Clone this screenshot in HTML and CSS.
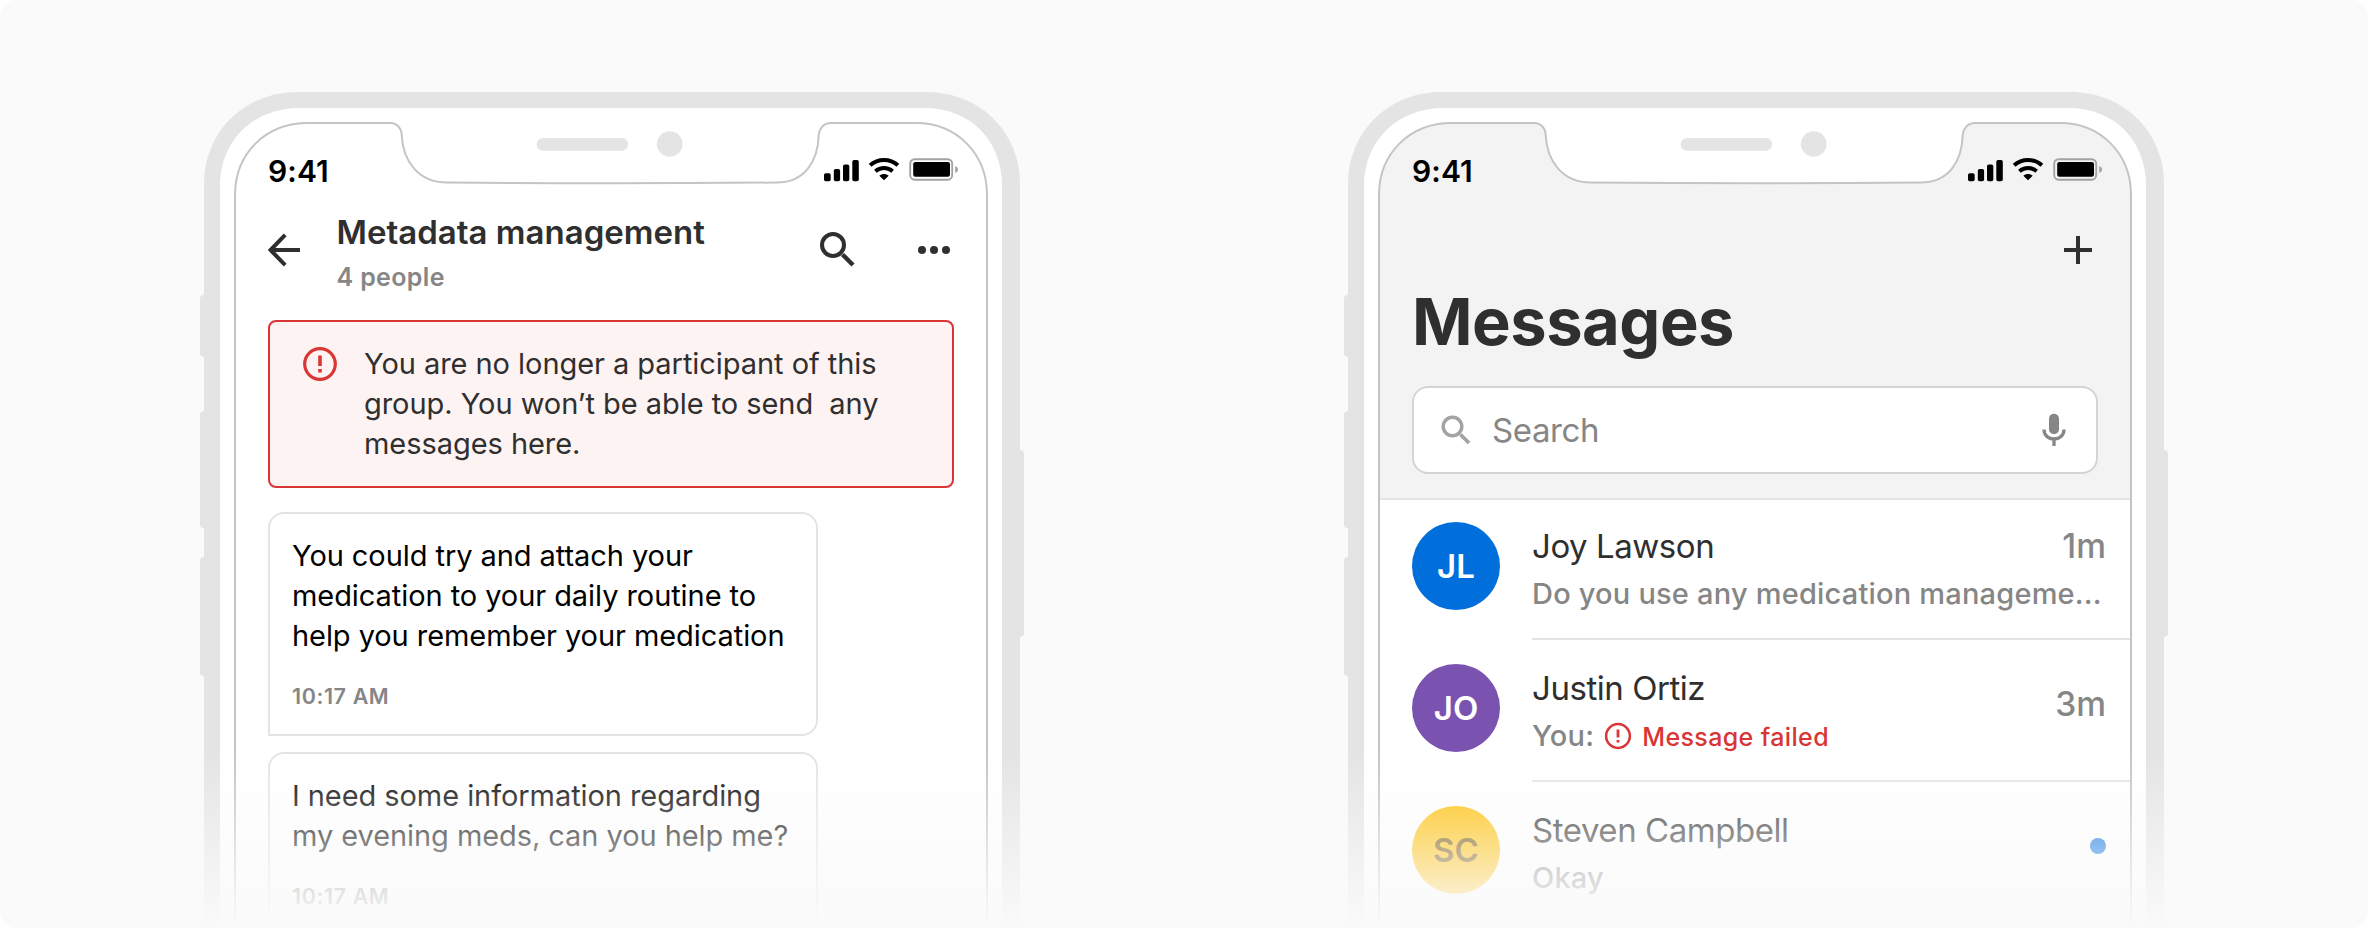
FILE: index.html
```html
<!DOCTYPE html>
<html lang="en">
<head>
<meta charset="utf-8">
<title>Messages</title>
<link rel="stylesheet" href="styles.css">
</head>
<body>
<svg class="defs" width="0" height="0">
  <defs>
    <g id="frame">
      <rect x="0" y="203" width="8" height="62" rx="4"/>
      <rect x="0" y="319" width="8" height="117" rx="4"/>
      <rect x="0" y="465" width="8" height="119" rx="4"/>
      <rect x="816" y="358" width="8" height="187" rx="4"/>
      <path d="M4 850V92C4 40 44 0 98 0H726C780 0 820 40 820 92V850Z"/>
      <path fill="#fff" d="M20 850V94C20 48 54 16 100 16H724C770 16 802 48 802 94V850Z"/>
    </g>
    <path id="outline" d="M35 850V103C35 62 65 31 108 31H190C197 31 201.500 36 201.700 43C203 70 219 90.500 247 90.500Q412 92 577 90.500C604 90.500 618 70 618.700 43C619.500 36 624 31 631 31H716C757 31 787 62 787 103V850"/>
    <g id="sensors">
      <rect x="336.700" y="46" width="91.300" height="12.700" rx="6.300"/>
      <circle cx="469.700" cy="52" r="12.800"/>
    </g>
    <g id="status">
      <rect x="2" y="17.300" width="6.700" height="8" rx="1.800"/>
      <rect x="11.800" y="13" width="6.300" height="12.300" rx="1.800"/>
      <rect x="21" y="8.500" width="6.300" height="16.800" rx="1.800"/>
      <rect x="30.300" y="4" width="6.500" height="21.300" rx="1.800"/>
      <g fill="none" stroke="#000" stroke-width="4">
        <path d="M48.100 9.300C56 2.200 68 2.200 75.900 9.300"/>
        <path d="M53.400 15.200C58.500 10.900 65.500 10.900 70.600 15.200"/>
      </g>
      <path d="M57.300 19.700C60 17.300 64 17.300 66.700 19.700L62 24.200Z"/>
      <rect x="88.200" y="3.200" width="42" height="20.500" rx="4.500" fill="none" stroke="#a3a3a3" stroke-width="1.900"/>
      <rect x="91.200" y="6" width="36.800" height="14.800" rx="2.200"/>
      <path fill="#a3a3a3" d="M133.200 10C137 11.500 137 15.500 133.200 17Z"/>
    </g>
    <g id="alert">
      <circle cx="18" cy="18" r="15.300" fill="none" stroke="#da3535" stroke-width="3.200"/>
      <path fill="#da3535" d="M16.200 9.500h3.600v10.500h-3.600zM16.200 23h3.600v3.500h-3.600z"/>
    </g>
  </defs>
</svg>

<main class="stage">
  <section class="phone">
    <svg class="phone-frame" width="824" height="836" viewBox="0 0 824 836" fill="#e4e4e4">
      <use href="#frame"/>
      <use href="#outline" fill="none" stroke="#c4c4c4" stroke-width="2"/>
      <use href="#sensors"/>
    </svg>
    <div class="screen">
      <div class="status">
        <span class="clock">9:41</span>
        <svg class="status-icons" width="138" height="28" viewBox="0 0 138 28"><use href="#status"/></svg>
      </div>
      <header class="chat-header">
        <svg class="back" width="34" height="34" viewBox="0 0 34 34" fill="none" stroke="#2f2f2f" stroke-width="4"><path d="M32 17H3M17.200 1.900L2.500 17L17.200 32.100" stroke-linejoin="miter"/></svg>
        <div class="chat-heading">
          <h1 class="chat-title">Metadata management</h1>
          <p class="chat-sub">4 people</p>
        </div>
        <svg class="find" width="38" height="38" viewBox="0 0 38 38" fill="none" stroke="#2f2f2f" stroke-width="4"><circle cx="14" cy="14" r="11"/><path d="M23.500 23.500L34 34" stroke-width="4.400"/></svg>
        <svg class="more" width="32" height="8" viewBox="0 0 32 8" fill="#2f2f2f"><circle cx="4" cy="4" r="4"/><circle cx="16" cy="4" r="4"/><circle cx="28" cy="4" r="4"/></svg>
      </header>
      <div class="banner">
        <svg class="banner-icon" width="36" height="36" viewBox="0 0 36 36"><use href="#alert"/></svg>
        <p class="banner-text">You are no longer a participant of this<br>group. You won’t be able to send &nbsp;any<br>messages here.</p>
      </div>
      <article class="bubble">
        <p class="bubble-text">You could try and attach your<br>medication to your daily routine to<br>help you remember your medication</p>
        <time class="bubble-time">10:17 AM</time>
      </article>
      <article class="bubble">
        <p class="bubble-text">I need some information regarding<br>my evening meds, can you help me?</p>
        <time class="bubble-time">10:17 AM</time>
      </article>
    </div>
  </section>

  <section class="phone">
    <svg class="phone-frame" width="824" height="836" viewBox="0 0 824 836" fill="#e4e4e4">
      <use href="#frame"/>
      <clipPath id="top"><rect width="824" height="406"/></clipPath>
      <use href="#outline" fill="#f3f3f3" clip-path="url(#top)"/>
      <use href="#outline" fill="none" stroke="#c4c4c4" stroke-width="2"/>
      <use href="#sensors"/>
    </svg>
    <div class="screen">
      <div class="status">
        <span class="clock">9:41</span>
        <svg class="status-icons" width="138" height="28" viewBox="0 0 138 28"><use href="#status"/></svg>
      </div>
      <header class="inbox-header">
        <svg class="plus" width="28" height="28" viewBox="0 0 28 28" fill="none" stroke="#2f2f2f" stroke-width="4"><path d="M14 0V28M0 14H28"/></svg>
        <h1 class="inbox-title">Messages</h1>
        <div class="search">
          <svg width="32" height="32" viewBox="0 0 32 32" fill="none" stroke="#a3a3a3" stroke-width="3.400"><circle cx="12.500" cy="12.500" r="9.300"/><path d="M20.500 20.500L29 29" stroke-width="3.800"/></svg>
          <span class="search-label">Search</span>
          <svg width="24" height="34" viewBox="0 0 24 34" fill="none" stroke="#868686" stroke-width="3.300"><rect x="7" y="0.700" width="10" height="20.600" rx="5" fill="#868686" stroke="none"/><path d="M2 16.500C2 22.500 6.500 26 12 26S22 22.500 22 16.500M12 26V33"/></svg>
        </div>
      </header>
      <ul class="threads">
        <li class="thread">
          <span class="avatar avatar-blue">JL</span>
          <div class="thread-body">
            <span class="name">Joy Lawson</span>
            <time class="when when-top">1m</time>
            <p class="preview">Do you use any medication manageme...</p>
          </div>
        </li>
        <li class="thread">
          <span class="avatar avatar-purple">JO</span>
          <div class="thread-body">
            <span class="name">Justin Ortiz</span>
            <time class="when">3m</time>
            <p class="preview">You:
              <svg class="fail-icon" width="28" height="28" viewBox="0 0 36 36"><use href="#alert"/></svg><span class="fail">Message failed</span></p>
          </div>
        </li>
        <li class="thread">
          <span class="avatar avatar-yellow">SC</span>
          <div class="thread-body">
            <span class="name">Steven Campbell</span>
            <span class="unread"></span>
            <p class="preview">Okay</p>
          </div>
        </li>
      </ul>
    </div>
  </section>
</main>
</body>
</html>
```
FILE: styles.css
```css
* { box-sizing: border-box; margin: 0; padding: 0; }
body {
  width: 2368px;
  height: 928px;
  background: #fff;
  overflow: hidden;
  font-family: Inter, "Liberation Sans", sans-serif;
  color: #2f2f2f;
}
.defs { position: absolute; }
svg { display: block; flex: none; }

.stage {
  position: relative;
  display: flex;
  gap: 320px;
  height: 928px;
  padding: 92px 200px 0;
  background: #fafafa;
  border-radius: 16px;
  overflow: hidden;
}
.stage::after {
  content: "";
  position: absolute;
  inset: 750px 0 0;
  background: linear-gradient(rgba(250, 250, 250, 0), #fafafa);
}

.phone { position: relative; width: 824px; height: 836px; flex: none; }
.phone-frame { position: absolute; inset: 0; }
.screen {
  position: relative;
  height: 836px;
  padding: 52px 38px 0 36px;
  overflow: hidden;
}

.status {
  display: flex;
  justify-content: space-between;
  height: 56px;
  padding: 0 26px 0 32px;
}
.clock { font-size: 30px; line-height: 54px; font-weight: 600; color: #000; letter-spacing: 0.1px; }
.status-icons { margin-top: 12px; }

.chat-header {
  display: flex;
  align-items: flex-start;
  height: 120px;
  padding: 12px 36px 0 32px;
}
.back { margin-top: 21px; }
.chat-heading { flex: 1; margin-left: 34.5px; }
.chat-title { font-size: 33px; line-height: 40px; font-weight: 600; letter-spacing: 0; white-space: nowrap; }
.chat-sub { margin-top: 7px; font-size: 25px; line-height: 36px; font-weight: 600; letter-spacing: 0.35px; color: #868686; }
.find { margin: 19px 61px 0 0; }
.more { margin-top: 34px; }

.banner {
  display: flex;
  width: 686px;
  height: 168px;
  margin-left: 32px;
  padding: 21px 32px 0;
  border: 2px solid #da3535;
  border-radius: 8px;
  background: #fdf3f2;
}
.banner-icon { margin-top: 3px; }
.banner-text { margin: 1px 0 0 26px; font-size: 29px; line-height: 40px; letter-spacing: -0.05px; white-space: nowrap; }

.bubble {
  width: 550px;
  height: 224px;
  margin: 24px 0 0 32px;
  padding: 22px 22px 0;
  border: 2px solid #e4e4e4;
  border-radius: 16px 16px 16px 0;
  background: #fff;
  white-space: nowrap;
}
.bubble + .bubble { margin-top: 16px; }
.bubble-text { font-size: 29px; line-height: 40px; letter-spacing: -0.07px; color: #000; }
.bubble-time {
  display: block;
  margin-top: 25px;
  font-size: 21.5px;
  line-height: 30px;
  font-weight: 600;
  letter-spacing: 0.6px;
  color: #868686;
}

.inbox-header { height: 298px; padding: 36px 32px 0; }
.plus { margin: 0 6px 0 auto; }
.inbox-title { margin-top: 18px; font-size: 65px; line-height: 80px; font-weight: 700; letter-spacing: -0.5px; }
.search {
  display: flex;
  align-items: center;
  width: 686px;
  height: 88px;
  margin-top: 24px;
  padding: 0 30px 0 26px;
  border: 2px solid #d4d4d4;
  border-radius: 16px;
  background: #fff;
}
.search-label { flex: 1; margin-left: 20px; font-size: 33px; line-height: 44px; letter-spacing: -0.4px; color: #868686; }

.threads { list-style: none; box-shadow: inset 0 2px #e4e4e4; }
.thread { display: flex; height: 142px; padding-left: 32px; }
.avatar {
  width: 88px;
  height: 88px;
  margin: 24px 32px 0 0;
  border-radius: 50%;
  color: #fff;
  font-size: 33px;
  line-height: 88px;
  font-weight: 600;
  text-align: center;
}
.avatar-blue { background: #006fdc; }
.avatar-purple { background: #7a52b0; }
.avatar-yellow { background: #ffbe00; color: #704c00; }
.thread-body {
  flex: 1;
  display: grid;
  grid-template: 44px 40px / 1fr auto;
  row-gap: 6px;
  padding: 26px 24px 0 0;
  border-bottom: 2px solid #e4e4e4;
  white-space: nowrap;
}
.name { grid-area: 1 / 1; font-size: 33px; line-height: 44px; letter-spacing: -0.45px; }
.when { grid-area: 1 / 2; margin: 16px 0 0 0; font-size: 33.5px; line-height: 44px; font-weight: 450; color: #868686; }
.when-top { margin-top: 0; }
.unread { grid-area: 1 / 2; width: 16px; height: 16px; margin-top: 30px; border-radius: 50%; background: #006fdc; }
.preview {
  grid-area: 2 / 1 / 3 / 3;
  display: flex;
  align-items: center;
  font-size: 29px;
  line-height: 40px;
  font-weight: 450;
  letter-spacing: 0.2px;
  color: #868686;
}
.fail-icon { margin: 0 10px; }
.fail { color: #da3535; font-size: 25px; line-height: 40px; padding-top: 2px; font-weight: 500; letter-spacing: 0.38px; }
```
